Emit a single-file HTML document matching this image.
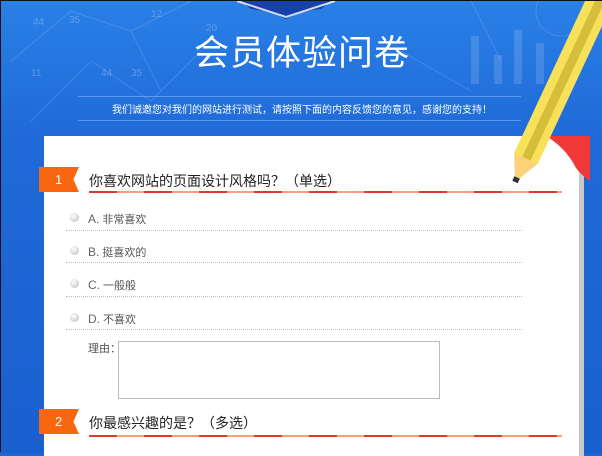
<!DOCTYPE html>
<html><head><meta charset="utf-8"><style>
*{margin:0;padding:0;box-sizing:border-box}
body{width:602px;height:452px;overflow:hidden;position:relative;background:#1e66d4;font-family:"Liberation Sans","Noto Sans CJK SC",sans-serif;border:1px solid #111}
.bg{position:absolute;left:0;top:0;width:602px;height:452px;background:linear-gradient(180deg,#2a80e6 0%,#1f6ad8 30%,#1a5fcf 100%)}
.title{position:absolute;left:0;width:602px;top:24px;text-align:center;color:#fff;font-size:35px;letter-spacing:1px}
.sub{position:absolute;left:0;width:602px;top:100px;text-align:center;color:#fff;font-size:10px}
.hl{position:absolute;left:77px;width:443px;height:1px;background:rgba(140,190,255,.55)}
.card{position:absolute;left:43px;top:135px;width:540px;height:320px;background:#fff;border-right:5px solid #c8c8c8}
.tag{position:absolute;left:38px;width:40px;height:25px;background:#f8660f;color:#fff;font-size:13px;line-height:25px;padding-left:16px;clip-path:polygon(0 0,100% 0,86% 50%,100% 100%,0 100%)}
.q{position:absolute;left:88px;font-size:14px;color:#222}
.ul{position:absolute;left:88px;width:473px;height:2px;background:repeating-linear-gradient(90deg,#e03a2a 0 28px,#f3a27a 28px 55px)}
.opt{position:absolute;left:87px;font-size:11px;color:#555}
.opt b{font-weight:normal;font-size:12px;color:#666}
.rd{position:absolute;left:69px;width:9px;height:9px;border-radius:50%;background:radial-gradient(circle at 40% 35%,#fff,#bbb)}
.dl{position:absolute;left:65px;width:456px;border-top:1px dotted #bbb}
</style></head><body>
<div class="bg"></div>
<svg style="position:absolute;left:0;top:0" width="602" height="140">
<g stroke="rgba(255,255,255,.15)" fill="none"><path d="M10 60L70 10L130 30L190 0M30 120L90 60L150 100L200 50M130 30L160 90"/><path d="M400 50L470 90M470 0L500 60"/><circle cx="560" cy="10" r="25"/></g>
<g fill="rgba(255,255,255,.25)" font-size="10" font-family="Liberation Sans"><text x="32" y="24">44</text><text x="68" y="22">35</text><text x="150" y="16">12</text><text x="205" y="30">20</text><text x="30" y="75">11</text><text x="100" y="75">44</text><text x="130" y="75">35</text></g>
<g fill="rgba(255,255,255,.14)"><rect x="470" y="35" width="8" height="48"/><rect x="493" y="54" width="8" height="29"/><rect x="513" y="29" width="8" height="54"/><rect x="535" y="42" width="8" height="41"/></g>
<path d="M240 0L330 0L320 8Q300 10 285 18Q270 10 250 8Z" fill="#1642a8"/>
<path d="M236 0L285 16L334 0" stroke="#fff" stroke-width="2" fill="none" opacity=".8"/>
</svg>
<div class="title">会员体验问卷</div>
<div class="hl" style="top:95px"></div>
<div class="hl" style="top:119px"></div>
<div class="sub">我们诚邀您对我们的网站进行测试，请按照下面的内容反馈您的意见，感谢您的支持！</div>
<div class="card"></div>
<svg style="position:absolute;left:545px;top:135px" width="44" height="50"><path d="M0 0H44V45Q36 40 30 32Q20 12 0 0Z" fill="#f03838"/></svg>
<div class="tag" style="top:166px">1</div>
<div class="q" style="top:170px">你喜欢网站的页面设计风格吗？（单选）</div>
<div class="ul" style="top:190px"></div>
<div class="rd" style="top:212px"></div><div class="opt" style="top:210px"><b>A.</b> 非常喜欢</div><div class="dl" style="top:229px"></div>
<div class="rd" style="top:245px"></div><div class="opt" style="top:243px"><b>B.</b> 挺喜欢的</div><div class="dl" style="top:261px"></div>
<div class="rd" style="top:278px"></div><div class="opt" style="top:276px"><b>C.</b> 一般般</div><div class="dl" style="top:295px"></div>
<div class="rd" style="top:312px"></div><div class="opt" style="top:310px"><b>D.</b> 不喜欢</div><div class="dl" style="top:328px"></div>
<div class="opt" style="top:339px;left:87px">理由：</div>
<div style="position:absolute;left:117px;top:340px;width:322px;height:58px;border:1px solid #bbb;background:#fff"></div>
<div class="tag" style="top:408px">2</div>
<div class="q" style="top:412px">你最感兴趣的是？（多选）</div>
<div class="ul" style="top:434px"></div>
<svg style="position:absolute;left:0;top:0" width="602" height="200">
<g transform="translate(514,181) rotate(25)">
<path d="M0 0L-13 -26H13Z" fill="#fbd27a"/>
<rect x="-3" y="-5" width="6" height="5" fill="#333"/>
<rect x="-13" y="-210" width="26" height="184" fill="#f7e05a"/>
<rect x="-4" y="-210" width="9" height="184" fill="#d4be3a"/>
<rect x="-13" y="-215" width="26" height="8" fill="#c0392b"/>
</g></svg>
</body></html>
